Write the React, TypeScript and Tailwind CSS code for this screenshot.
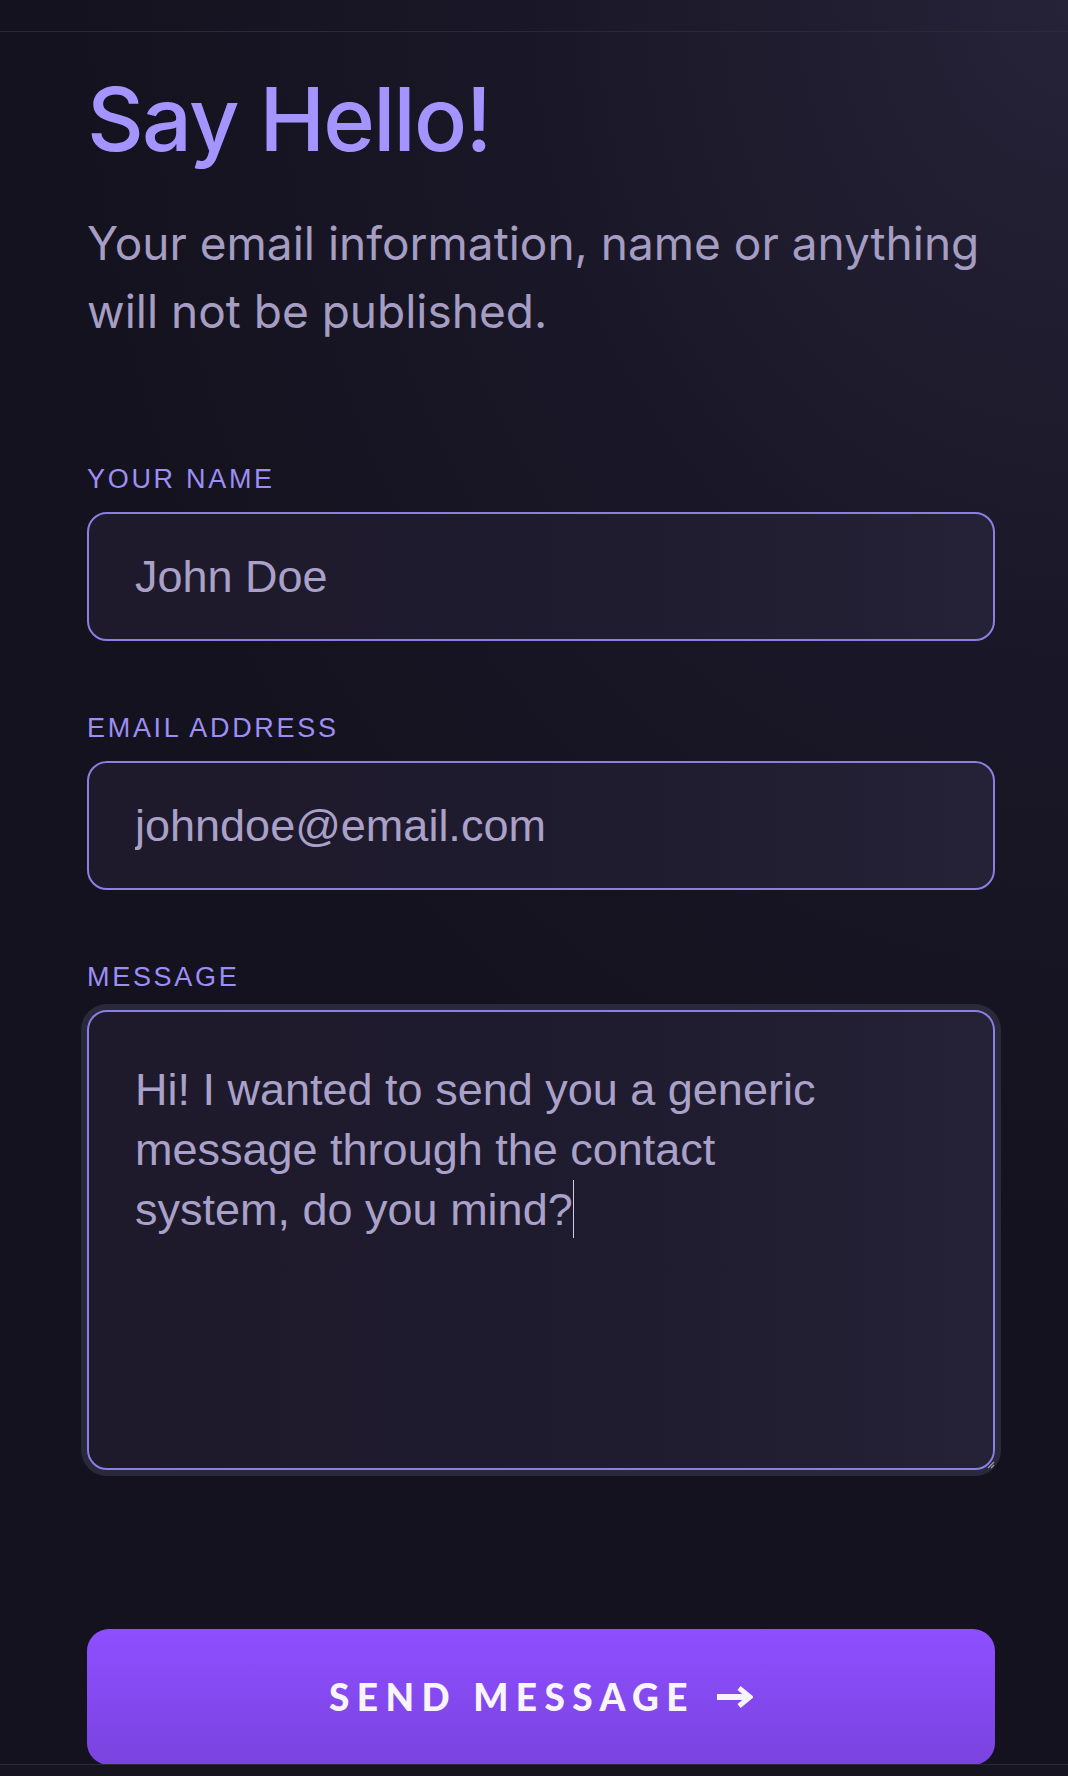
import React from 'react';

const labelCls =
  "text-[27px] leading-[32px] tracking-[0.1em] uppercase text-[#9d8ef5] font-['Liberation_Sans',Arial,sans-serif]";

const boxCls =
  "w-full rounded-[20px] border-2 border-[#8b7fe2] bg-gradient-to-r from-[#1e1a2c] via-[#1f1b2e] to-[#252136] text-[45px] text-[#aaa1c9] font-['Liberation_Sans',Arial,sans-serif]";

const Field: React.FC<{ label: string; value: string }> = ({ label, value }) => (
  <div className="flex flex-col gap-[17px]">
    <label className={labelCls}>{label}</label>
    <input
      readOnly
      defaultValue={value}
      className={`${boxCls} h-[129px] px-[46px] outline-none`}
    />
  </div>
);

export default function App() {
  return (
    <div className="h-[1776px] w-full overflow-hidden flex flex-col bg-[#14121e] bg-[radial-gradient(ellipse_95%_70%_at_100%_0%,#262238_0%,#1a1828_50%,#14121e_100%)]">
      {/* top bar */}
      <div className="h-[32px] shrink-0 border-b border-[#2b2937]" />

      <main className="flex-1 overflow-hidden pl-[87px] pr-[73px]">
        <h1 className="mt-[43px] text-[88px] leading-none font-medium text-[#a394ff] font-['Inter',sans-serif] tracking-[-0.02em]">
          Say Hello!
        </h1>
        <p className="mt-[46px] text-[46px] leading-[68px] text-[#a59dc2] font-['Inter',sans-serif]">
          Your email information, name or anything will not be published.
        </p>

        <form className="mt-[118px] flex flex-col gap-[71px]" onSubmit={(e) => e.preventDefault()}>
          <Field label="Your Name" value="John Doe" />
          <Field label="Email Address" value="johndoe@email.com" />

          <div className="flex flex-col gap-[17px]">
            <label className={labelCls}>Message</label>
            <div className="relative">
              <div
                className={`${boxCls} h-[460px] px-[46px] pt-[48px] leading-[60px] shadow-[0_0_0_6px_#282a3b] whitespace-pre-line`}
              >
                {'Hi! I wanted to send you a generic\nmessage through the contact\nsystem, do you mind?'}
                <span className="inline-block align-top w-px h-[58px] bg-[#d2caf2]" />
              </div>
              {/* resize grip */}
              <svg className="absolute right-[0px] bottom-[1px]" width="9" height="9" viewBox="0 0 9 9">
                <path d="M8 2 L2 8 M8 5 L5 8" stroke="#9a99a6" strokeWidth="1.2" />
              </svg>
            </div>
          </div>

          <button
            type="submit"
            className="mt-[88px] h-[136px] w-full shrink-0 rounded-[22px] bg-gradient-to-b from-[#8e4fff] to-[#7a43df] flex items-center justify-center gap-[22px]"
          >
            <span className="text-[37px] font-black tracking-[0.2em] text-[#f7f5fb] font-['Lato',sans-serif]">
              SEND MESSAGE
            </span>
            <svg width="36" height="22" viewBox="0 0 36 22" fill="none">
              <path d="M0 11 H30" stroke="#f7f5fb" strokeWidth="6" />
              <path d="M22 2 L33 11 L22 20" stroke="#f7f5fb" strokeWidth="5" strokeLinejoin="miter" />
            </svg>
          </button>
        </form>
      </main>

      {/* bottom bar */}
      <div className="h-[12px] shrink-0 border-t border-[#2a2a3a] bg-[#15141f]" />
    </div>
  );
}
